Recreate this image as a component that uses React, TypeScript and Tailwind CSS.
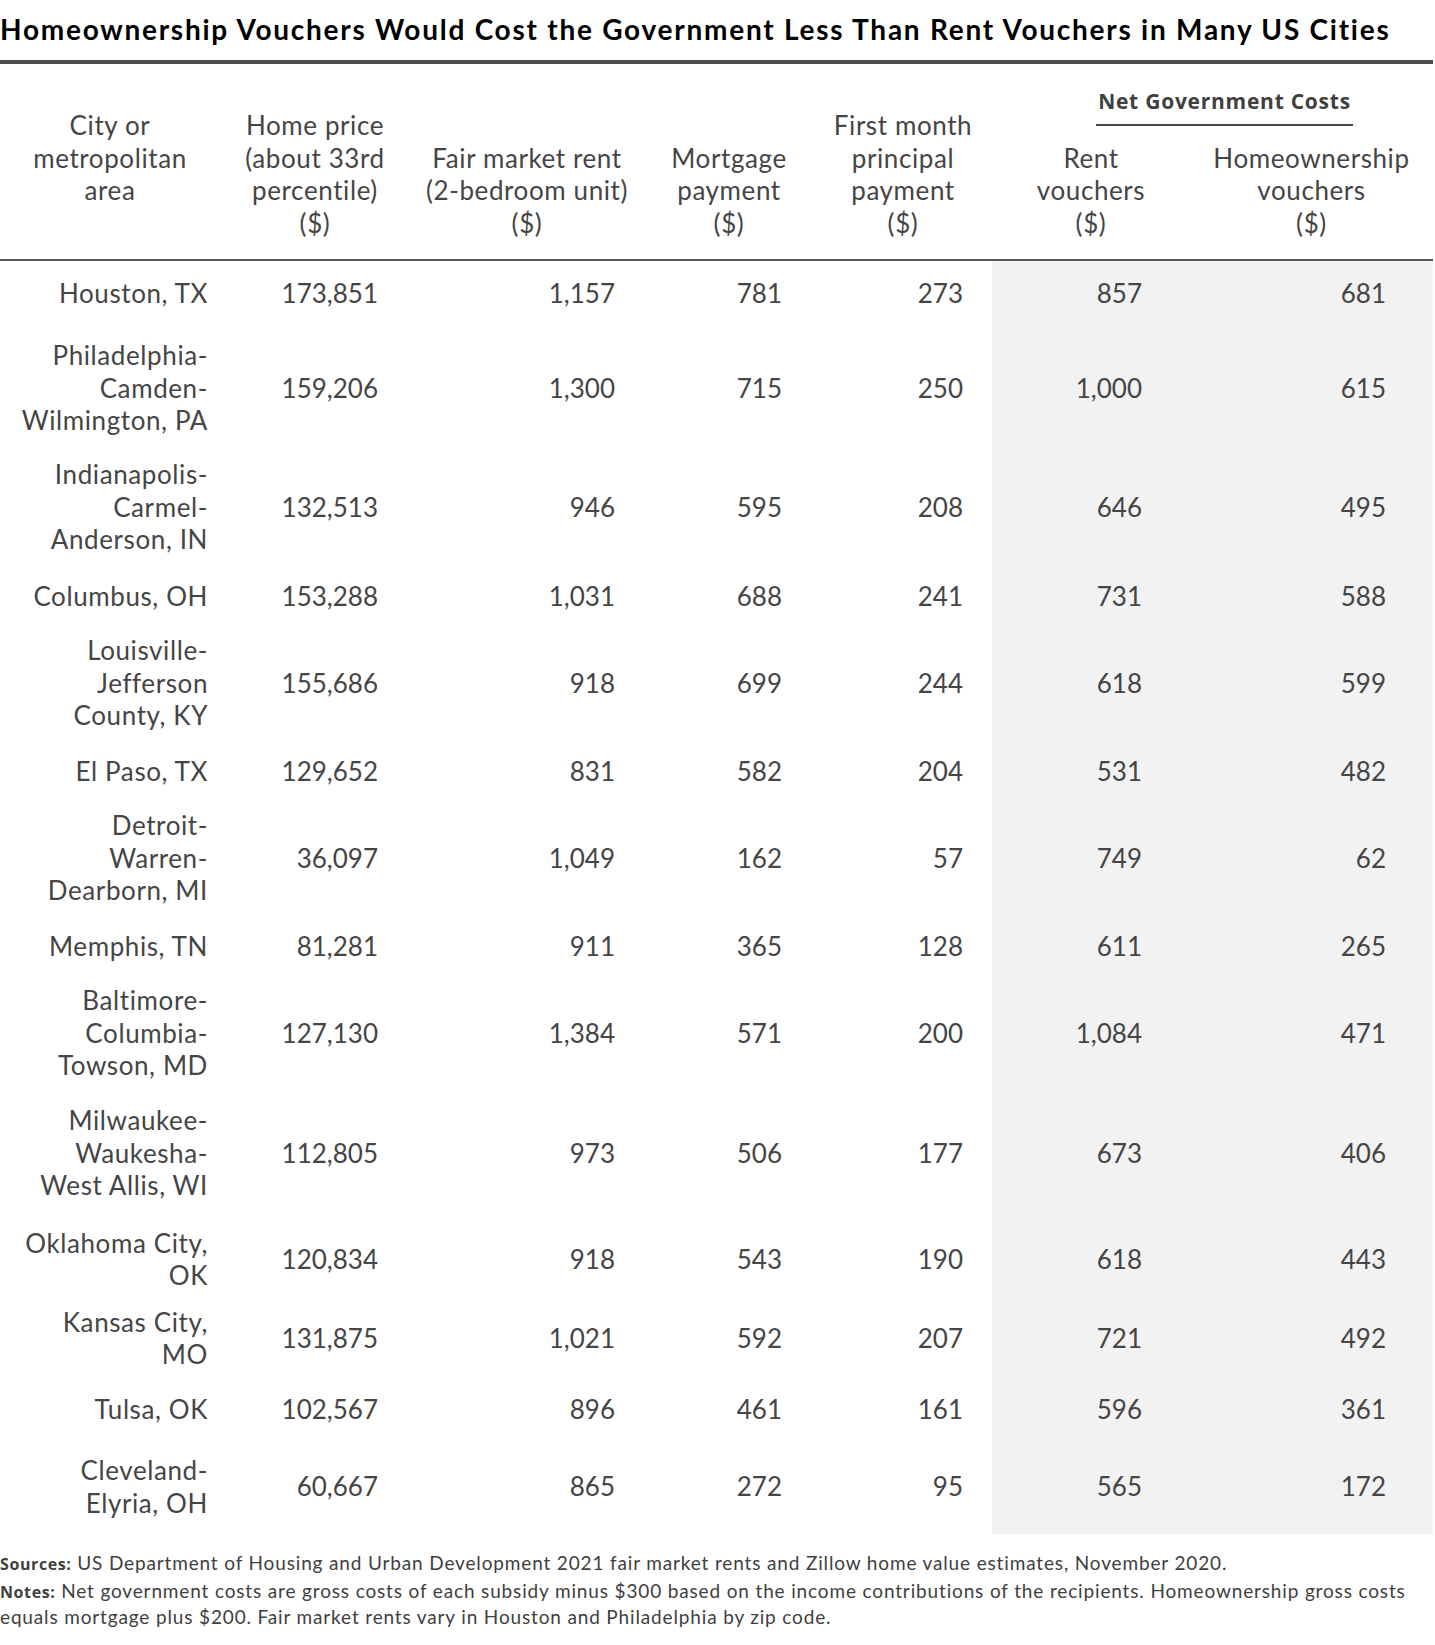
import React from "react";

const cols = "grid grid-cols-[220px_190px_234px_170px_178px_198px_243px]";

type Row = { city: string[]; v: string[]; h: string };

const rows: Row[] = [
  { city: ["Houston, TX"], v: ["173,851", "1,157", "781", "273", "857", "681"], h: "h-[64px]" },
  { city: ["Philadelphia-", "Camden-", "Wilmington, PA"], v: ["159,206", "1,300", "715", "250", "1,000", "615"], h: "h-[126px]" },
  { city: ["Indianapolis-", "Carmel-", "Anderson, IN"], v: ["132,513", "946", "595", "208", "646", "495"], h: "h-[112px]" },
  { city: ["Columbus, OH"], v: ["153,288", "1,031", "688", "241", "731", "588"], h: "h-[66px]" },
  { city: ["Louisville-", "Jefferson", "County, KY"], v: ["155,686", "918", "699", "244", "618", "599"], h: "h-[108px]" },
  { city: ["El Paso, TX"], v: ["129,652", "831", "582", "204", "531", "482"], h: "h-[68px]" },
  { city: ["Detroit-", "Warren-", "Dearborn, MI"], v: ["36,097", "1,049", "162", "57", "749", "62"], h: "h-[106px]" },
  { city: ["Memphis, TN"], v: ["81,281", "911", "365", "128", "611", "265"], h: "h-[70px]" },
  { city: ["Baltimore-", "Columbia-", "Towson, MD"], v: ["127,130", "1,384", "571", "200", "1,084", "471"], h: "h-[104px]" },
  { city: ["Milwaukee-", "Waukesha-", "West Allis, WI"], v: ["112,805", "973", "506", "177", "673", "406"], h: "h-[136px]" },
  { city: ["Oklahoma City,", "OK"], v: ["120,834", "918", "543", "190", "618", "443"], h: "h-[76px]" },
  { city: ["Kansas City,", "MO"], v: ["131,875", "1,021", "592", "207", "721", "492"], h: "h-[82px]" },
  { city: ["Tulsa, OK"], v: ["102,567", "896", "461", "161", "596", "361"], h: "h-[60px]" },
  { city: ["Cleveland-", "Elyria, OH"], v: ["60,667", "865", "272", "95", "565", "172"], h: "h-[95px]" },
];

const valPad = ["pr-[32px]", "pr-[29px]", "pr-[32px]", "pr-[29px]", "pr-[48px]", "pr-[47px]"];

function Lines({ lines }: { lines: string[] }) {
  return (
    <>
      {lines.map((l, i) => (
        <div key={i} className="whitespace-nowrap">
          {l}
        </div>
      ))}
    </>
  );
}

export default function App() {
  return (
    <div className="w-[1433px] bg-white font-['Lato',sans-serif] text-[#454545]">
      {/* Title */}
      <div className="pt-[9px] pb-[11px] text-[28px] leading-[40px] font-bold tracking-[1.75px] text-black whitespace-nowrap">
        Homeownership Vouchers Would Cost the Government Less Than Rent Vouchers in Many US Cities
      </div>
      <div className="h-[4px] bg-[#4d4d4d]" />

      {/* Header */}
      <div className={`${cols} h-[195px] items-end pb-[20px] text-[26px] leading-[32.5px] tracking-[0.6px] text-center`}>
        <div className="pb-[32.5px]">
          <Lines lines={["City or", "metropolitan", "area"]} />
        </div>
        <div>
          <Lines lines={["Home price", "(about 33rd", "percentile)", "($)"]} />
        </div>
        <div>
          <Lines lines={["Fair market rent", "(2-bedroom unit)", "($)"]} />
        </div>
        <div>
          <Lines lines={["Mortgage", "payment", "($)"]} />
        </div>
        <div>
          <Lines lines={["First month", "principal", "payment", "($)"]} />
        </div>
        <div className="col-span-2 flex flex-col">
          <div className="ml-[104px] w-[257px] border-b-2 border-[#444] pb-[9px] mb-[16px]">
            <div className="font-['Open_Sans',sans-serif] font-bold text-[21px] leading-[28px] tracking-[0.75px] text-[#404040] whitespace-nowrap">
              Net Government Costs
            </div>
          </div>
          <div className="grid grid-cols-[198px_243px]">
            <div>
              <Lines lines={["Rent", "vouchers", "($)"]} />
            </div>
            <div>
              <Lines lines={["Homeownership", "vouchers", "($)"]} />
            </div>
          </div>
        </div>
      </div>
      <div className="h-[2px] bg-[#555]" />

      {/* Body */}
      <div className="text-[26px] leading-[32.5px]">
        {rows.map((r, i) => (
          <div key={i} className={`${cols} ${r.h}`}>
            <div className="flex items-center justify-end pr-[12px] text-right tracking-[0.6px]">
              <div>
                <Lines lines={r.city} />
              </div>
            </div>
            {r.v.map((v, j) => (
              <div
                key={j}
                className={`flex items-center justify-end ${valPad[j]} ${j >= 4 ? "bg-[#f2f2f2]" : ""}`}
              >
                {v}
              </div>
            ))}
          </div>
        ))}
      </div>

      {/* Footer */}
      <div className="pt-[16px] pb-[10px] text-[19px] leading-[25px] tracking-[0.85px] text-[#404040]">
        <div className="whitespace-nowrap">
          <span className="font-['Open_Sans',sans-serif] font-bold text-[16px] tracking-[0.6px]">Sources:</span> US
          Department of Housing and Urban Development 2021 fair market rents and Zillow home value estimates, November
          2020.
        </div>
        <div className="mt-[2px] leading-[24.5px]">
          <div className="whitespace-nowrap">
            <span className="font-['Open_Sans',sans-serif] font-bold text-[16px] tracking-[0.6px]">Notes:</span> Net
            government costs are gross costs of each subsidy minus $300 based on the income contributions of the
            recipients. Homeownership gross costs
          </div>
          <div className="whitespace-nowrap">
            equals mortgage plus $200. Fair market rents vary in Houston and Philadelphia by zip code.
          </div>
        </div>
      </div>
    </div>
  );
}
